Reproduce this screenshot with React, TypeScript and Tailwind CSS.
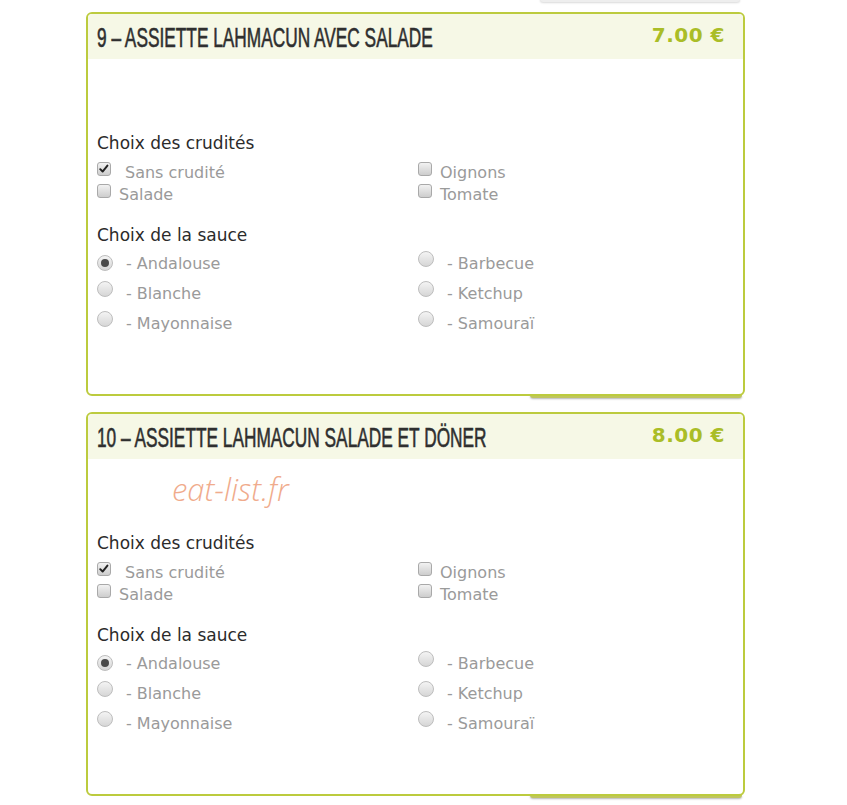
import React from 'react';

type Product = {
  title: string;
  price: string;
  watermark?: boolean;
};

const products: Product[] = [
  { title: '9 – ASSIETTE LAHMACUN AVEC SALADE', price: '7.00 €' },
  { title: '10 – ASSIETTE LAHMACUN SALADE ET DÖNER', price: '8.00 €', watermark: true },
];

const crudites = [
  { label: 'Sans crudité', checked: true, wide: true },
  { label: 'Oignons' },
  { label: 'Salade' },
  { label: 'Tomate' },
];

const sauces = ['Andalouse', 'Barbecue', 'Blanche', 'Ketchup', 'Mayonnaise', 'Samouraï'];

const Checkbox = ({ checked }: { checked?: boolean }) => (
  <span className="relative inline-block w-[14px] h-[14px] rounded-[3px] border border-[#a9a9a9] bg-gradient-to-b from-[#f2f2f2] to-[#cdcdcd] shrink-0">
    {checked && (
      <svg viewBox="0 0 14 14" className="absolute left-0 top-0 w-[12px] h-[12px]">
        <path d="M2.6 7.2 L5.4 10 L11 3" fill="none" stroke="#222" strokeWidth="2.3" strokeLinecap="round" strokeLinejoin="round" />
      </svg>
    )}
  </span>
);

const Radio = ({ checked }: { checked?: boolean }) => (
  <span className="relative inline-flex items-center justify-center w-[16px] h-[16px] rounded-full border border-[#bdbdbd] bg-gradient-to-b from-[#f4f4f4] to-[#d6d6d6] shrink-0">
    {checked && <span className="w-[8px] h-[8px] rounded-full bg-[#4a4a4a]" />}
  </span>
);

const Card = ({ p }: { p: Product }) => (
  <div className="relative w-[659px] h-[384px]">
    <div className="absolute right-[3px] bottom-[-2px] w-[212px] h-[3px] rounded-b-[4px] bg-[#bfc55e] shadow-[0_1px_2px_rgba(0,0,0,0.3)]" />
    <div className="relative h-full border-2 border-[#bccb3e] rounded-[6px] bg-white overflow-hidden">
      <div className="flex items-start h-[45px] bg-[#f6f8e6] pl-[9px] pr-[18px]">
        <div className="flex-1 min-w-0 pt-[11px]">
          <span
            className="inline-block origin-left scale-x-[0.64] whitespace-nowrap text-[27px] leading-none text-[#2f2f2f] [-webkit-text-stroke:0.6px_#2f2f2f]"
            style={{ fontFamily: '"Liberation Sans", Arial, sans-serif' }}
          >
            {p.title}
          </span>
        </div>
        <span
          className="shrink-0 whitespace-nowrap pt-[6px] text-[20px] font-bold text-[#aabd27] tracking-[0.5px]"
          style={{ fontFamily: '"DejaVu Sans", Verdana, sans-serif' }}
        >
          {p.price}
        </span>
      </div>

      {p.watermark && (
        <div className="absolute left-[84px] top-[52px] text-[31px] italic font-light text-[#f0ab8c]" style={{ fontFamily: '"Open Sans", sans-serif' }}>
          eat-list.fr
        </div>
      )}

      <div className="pl-[9px] pt-[75px]" style={{ fontFamily: '"DejaVu Sans", Verdana, sans-serif' }}>
        <div className="text-[17px] leading-[18px] text-[#2b2b2b]">Choix des crudités</div>
        <div className="grid grid-cols-[321px_1fr] mt-[10px]">
          {crudites.map((c) => (
            <div key={c.label} className="flex items-center h-[22px] gap-[8px]">
              <span className="-mt-[5px]">
                <Checkbox checked={c.checked} />
              </span>
              <span className={`text-[16px] text-[#9a9a9a] ${c.wide ? 'ml-[6px]' : ''}`}>{c.label}</span>
            </div>
          ))}
        </div>

        <div className="text-[17px] leading-[18px] text-[#2b2b2b] mt-[20px]">Choix de la sauce</div>
        <div className="grid grid-cols-[321px_1fr] mt-[5px]">
          {sauces.map((s, i) => (
            <div key={s} className="flex items-center h-[30px] gap-[13px]">
              <span className="-mt-[5px]">
                <Radio checked={i === 0} />
              </span>
              <span className="text-[16px] text-[#9a9a9a]">- {s}</span>
            </div>
          ))}
        </div>
      </div>
    </div>
  </div>
);

export default function App() {
  return (
    <div className="relative w-[847px] h-[805px] bg-white overflow-hidden">
      <div className="absolute left-[540px] top-[-2px] w-[200px] h-[4px] rounded-b-[3px] bg-[#eeeeee] shadow-[0_1px_2px_rgba(0,0,0,0.15)]" />
      <div className="flex flex-col gap-[16px] pl-[86px] pt-[12px]">
        {products.map((p) => (
          <Card key={p.title} p={p} />
        ))}
      </div>
    </div>
  );
}
